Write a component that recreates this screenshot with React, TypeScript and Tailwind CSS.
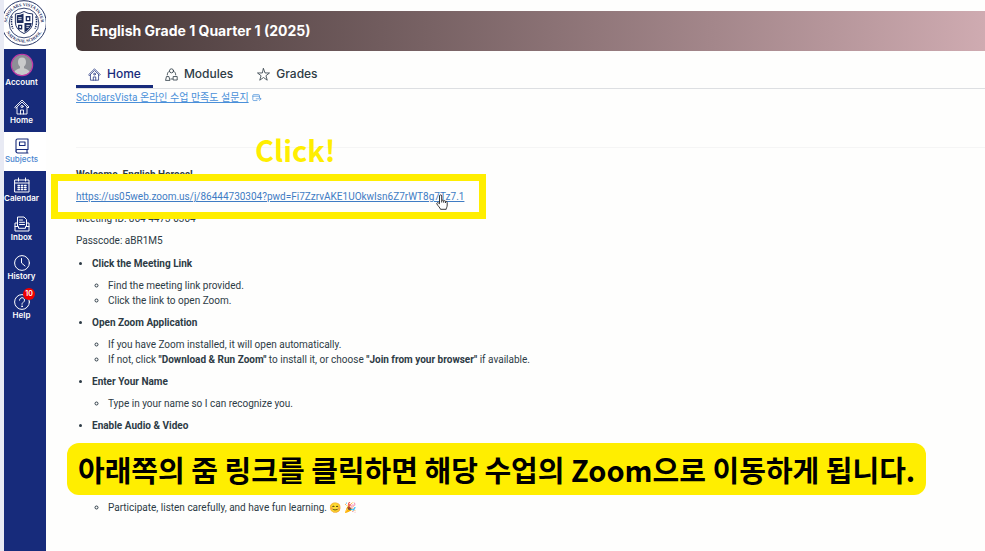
import type { ReactNode } from "react";

interface IconProps {
  className?: string;
}

const stroke = {
  fill: "none",
  stroke: "currentColor",
  strokeLinecap: "round" as const,
  strokeLinejoin: "round" as const,
};

function HouseIcon({ className }: IconProps) {
  return (
    <svg viewBox="0 0 16 16" className={className} {...stroke} strokeWidth="0.9">
      <path d="M1 8 8 1l7 7-1 1-6-6-6 6z" />
      <path d="M3 8.500V15h10V8.500M6.500 15v-4h3v4" />
      <circle cx="8" cy="7.500" r="1.100" />
    </svg>
  );
}

function BookIcon({ className }: IconProps) {
  return (
    <svg viewBox="0 0 16 16" className={className} {...stroke} strokeWidth="1.1">
      <path d="M3.500 1H14v10.500H3.500A1.500 1.500 0 0 0 2 13V2.500A1.500 1.500 0 0 1 3.500 1z" />
      <path d="M2 13a1.800 1.800 0 0 0 1.800 2H14M13 11.500V15" />
      <path d="M5.500 4h5.500v3.500H5.500z" />
    </svg>
  );
}

function CalendarIcon({ className }: IconProps) {
  return (
    <svg viewBox="0 0 16 16" className={className} {...stroke} strokeWidth="1">
      <path d="M1 3h14v12H1zM1 6h14M4.500 1v3M11.500 1v3" />
      <path
        d="M4 8.500h1.500M7.300 8.500h1.500M10.600 8.500h1.500M4 10.500h1.500M7.300 10.500h1.500M10.600 10.500h1.500M4 12.500h1.500M7.300 12.500h1.500M10.600 12.500h1.500"
        strokeWidth="1.3"
      />
    </svg>
  );
}

function InboxIcon({ className }: IconProps) {
  return (
    <svg viewBox="0 0 16 16" className={className} {...stroke} strokeWidth="1">
      <path d="M3.500 10V1h6.500l2.500 2.500V10" />
      <path d="M5.500 4h3M5.500 6.300h5M5.500 8.500h5" />
      <path d="M3.500 7H1v8h14V7h-2.500M1 10.500h3.500v1.800h7v-1.800H15" />
    </svg>
  );
}

function ClockIcon({ className }: IconProps) {
  return (
    <svg viewBox="0 0 16 16" className={className} {...stroke} strokeWidth="1">
      <circle cx="8" cy="8" r="7.400" />
      <path d="M7.500 3.500V8l3.500 3" />
    </svg>
  );
}

function HelpIcon({ className }: IconProps) {
  return (
    <svg viewBox="0 0 16 16" className={className} {...stroke} strokeWidth="1">
      <circle cx="8" cy="8" r="7.400" />
      <path d="M5.500 6.200a2.500 2.500 0 1 1 3.800 2.100C8.400 8.900 8 9.300 8 10.300" />
      <circle cx="8" cy="12.300" r="0.500" />
    </svg>
  );
}

function AvatarIcon() {
  return (
    <svg viewBox="0 0 24 24" className="size-6 shrink-0">
      <circle cx="12" cy="12" r="10.500" fill="#8d8f96" />
      <path
        d="M12 4.500c-2.800 0-4 2-4 4.500 0 2 .8 3.600 2 4.600v1.600c-2 .8-4.600 1.200-5.600 3.600a10.500 10.500 0 0 0 15.200 0c-1-2.400-3.600-2.800-5.600-3.600v-1.600c1.200-1 2-2.600 2-4.600 0-2.500-1.200-4.500-4-4.500z"
        fill="#c9cacb"
      />
      <circle cx="12" cy="12" r="10.700" fill="none" stroke="#c83aa8" strokeWidth="1.1" />
    </svg>
  );
}

function ModulesIcon({ className }: IconProps) {
  return (
    <svg viewBox="0 0 16 16" className={className} {...stroke} strokeWidth="1">
      <circle cx="8" cy="3.500" r="2.500" />
      <path d="M.8 14.800l1-4.300h3l1.200 4.300zM10.500 10.500h4.500v4.300h-4.500z" />
      <path d="M5.500 3.800C3.800 4.600 2.800 6.300 2.800 8.500M10.500 3.800c1.700.8 2.700 2.500 2.700 4.700M7.200 13.500h2" />
    </svg>
  );
}

function StarIcon({ className }: IconProps) {
  return (
    <svg viewBox="0 0 16 16" className={className} {...stroke} strokeWidth="1">
      <path d="M8 .8l1.900 5.300h5.500l-4.400 3.400 1.600 5.500L8 11.700 3.400 15 5 9.500.6 6.100h5.500z" />
    </svg>
  );
}

function ExternalIcon() {
  return (
    <svg viewBox="0 0 12 10" className="h-2 w-[10px]" {...stroke} strokeWidth="0.9">
      <path d="M9 4V1.800a1 1 0 0 0-1-1H1.800a1 1 0 0 0-1 1v5.400a1 1 0 0 0 1 1H6M.8 2.800H9M5 6h6M9 4.200L11 6 9 8" />
    </svg>
  );
}

function SchoolSeal() {
  return (
    <svg viewBox="0 0 48 48" className="size-[46px] shrink-0" role="img" aria-label="Scholars Vista">
      <circle cx="24" cy="24" r="23.300" fill="#fff" stroke="#1c2c5e" strokeWidth="1" />
      <circle cx="24" cy="24" r="15.500" fill="none" stroke="#1c2c5e" strokeWidth="0.9" />
      <defs>
        <path id="seal-top" d="M9.400 34A17.700 17.700 0 1 1 38.600 34" />
        <path id="seal-bottom" d="M3 26A21.200 21.200 0 0 0 45 26" />
      </defs>
      <text fill="#1c2c5e" fontSize="4.500" fontWeight="700" fontFamily="Liberation Serif, serif">
        <textPath href="#seal-top" startOffset="50%" textAnchor="middle">
          SCHOLARS VISTA INTER
        </textPath>
      </text>
      <text fill="#1c2c5e" fontSize="4.500" fontWeight="700" fontFamily="Liberation Serif, serif">
        <textPath href="#seal-bottom" startOffset="50%" textAnchor="middle">
          NATIONAL SCHOOL
        </textPath>
      </text>
      <path d="M15 14.500q5 0 9-2.500 4 2.500 9 2.500V23q0 8-9 12-9-4-9-12z" fill="#fff" stroke="#1c2c5e" strokeWidth="1" />
      <path d="M16.500 16q4 0 7-1.800V24h-7zM24.500 24h7.500q-.5 6.500-7.500 9.700z" fill="#1c2c5e" />
      <path d="M18 18.500h3.500M18 20.500h3.500M26.500 26.500h3.500M26.500 28.500h2.500" stroke="#fff" strokeWidth="0.9" />
      <path d="M26.500 17.500h3.500v4h-3.500zM18.500 26.500h3v3.500h-3z" fill="none" stroke="#1c2c5e" strokeWidth="1.4" />
      <path
        d="M11.500 17q-1.500 7 1 13M36.500 17q1.500 7-1 13"
        fill="none"
        stroke="#1c2c5e"
        strokeWidth="1.6"
        strokeDasharray="1.500 1"
      />
    </svg>
  );
}

function HandCursor() {
  return (
    <svg viewBox="0 0 12 16" className="h-4 w-3" fill="#fff" stroke="#222" strokeWidth="0.9" strokeLinejoin="round">
      <path d="M3.500 9.800V2a1.100 1.100 0 0 1 2.200 0v4.500q1.200-.8 2 .3 1.200-.6 1.800.5 1.500-.3 1.700 1.200V11c0 2-.8 2.600-1 4.300H4.500C4 13.500 2.200 12.400.8 9.800c-.4-1 .9-1.500 1.500-.9z" />
      <path d="M5.700 6.500v2M7.700 7v1.700M9.500 7.500V9" fill="none" />
    </svg>
  );
}

const navItems = [
  { label: "Home", icon: HouseIcon },
  { label: "Subjects", icon: BookIcon, active: true },
  { label: "Calendar", icon: CalendarIcon },
  { label: "Inbox", icon: InboxIcon },
  { label: "History", icon: ClockIcon },
  { label: "Help", icon: HelpIcon, badge: 10 },
];

const tabs = [
  { label: "Home", icon: HouseIcon, active: true },
  { label: "Modules", icon: ModulesIcon },
  { label: "Grades", icon: StarIcon },
];

const steps: { title: string; items: ReactNode[] }[] = [
  {
    title: "Click the Meeting Link",
    items: ["Find the meeting link provided.", "Click the link to open Zoom."],
  },
  {
    title: "Open Zoom Application",
    items: [
      "If you have Zoom installed, it will open automatically.",
      <>
        If not, click <strong>"Download &amp; Run Zoom"</strong> to install it, or choose{" "}
        <strong>"Join from your browser"</strong> if available.
      </>,
    ],
  },
  { title: "Enter Your Name", items: ["Type in your name so I can recognize you."] },
];

function Sidebar() {
  return (
    <aside className="w-[46px] shrink-0 border-l-4 border-[#e8eaf4] bg-[#172b7b] text-white">
      <div className="flex h-[49px] items-end justify-center overflow-hidden bg-white pr-[2px] pb-[3px]">
        <SchoolSeal />
      </div>
      <nav className="flex flex-col text-[8px] leading-[10px] font-semibold">
        <a href="#account" className="flex h-11 flex-col items-center pt-1 pr-[7px]">
          <AvatarIcon />
          Account
        </a>
        {navItems.map(({ label, icon: Icon, active, badge }) => (
          <a
            key={label}
            href={`#${label.toLowerCase()}`}
            className={`relative flex h-[39px] flex-col items-center justify-center pr-[7px] pb-px ${
              active ? "bg-white font-medium text-[#4a86cf]" : ""
            }`}
          >
            <Icon className={active ? "size-4 text-[#172b7b]" : "size-4"} />
            {label}
            {badge && (
              <span className="absolute top-0 right-[11px] flex h-3 w-3 items-center justify-center rounded-full bg-[#f00000] text-[7px]">
                {badge}
              </span>
            )}
          </a>
        ))}
      </nav>
    </aside>
  );
}

function Tabs() {
  return (
    <nav className="flex border-b border-[#dddfe2] text-[12px] leading-4 font-medium text-[#2d3b45]">
      {tabs.map(({ label, icon: Icon, active }) => (
        <a
          key={label}
          href={`#tab-${label.toLowerCase()}`}
          className={`flex h-[29px] items-center gap-[6px] border-b-[3px] px-3 pt-1 ${
            active ? "border-[#172b7b] text-[#172b7b]" : "border-transparent"
          }`}
        >
          <Icon className="size-[13px]" />
          {label}
        </a>
      ))}
    </nav>
  );
}

export default function App() {
  return (
    <div className="relative flex min-h-screen overflow-hidden bg-[#fefefd] font-['Inter','Noto_Sans_CJK_KR',sans-serif]">
      <Sidebar />

      <main className="min-w-0 flex-1 pt-[11px] pl-[30px]">
        <header className="flex h-10 items-center rounded-l-md bg-linear-to-r from-[#463838] to-[#cfabb1] px-[15px]">
          <h1 className="text-[14px] leading-5 font-bold text-white">English Grade 1 Quarter 1 (2025)</h1>
        </header>

        <div className="pt-2">
          <Tabs />
        </div>

        <div className="pt-px font-['Roboto','Noto_Sans_CJK_KR',sans-serif] text-[10px] leading-[15px] text-[#2d3b45]">
          <a href="#survey" className="flex items-center gap-[3px] text-[#4a90d9]">
            <span className="underline">ScholarsVista 온라인 수업 만족도 설문지</span>
            <ExternalIcon />
          </a>

          <hr className="mt-[42px] border-[#f5f5f5]" />

          <div className="flex flex-col gap-[7px] pt-[19px]">
            <p className="font-bold">Welcome, English Heroes!</p>
            <div className="relative w-fit">
              <a href="#zoom-meeting" className="text-[#3f7cc4] underline">
                https://us05web.zoom.us/j/86444730304?pwd=Fi7ZzrvAKE1UOkwIsn6Z7rWT8g7Tz7.1
              </a>
              {/* Highlight around the meeting link */}
              <div className="pointer-events-none absolute -inset-y-[15px] -right-[22px] -left-[25px] border-[7px] border-[#ffee00]" />
              <div className="absolute top-[5px] right-4">
                <HandCursor />
              </div>
              <div className="absolute -top-[62px] left-[179px] font-['Noto_Sans_CJK_KR',sans-serif] text-[29px] leading-[44px] font-bold text-[#ffee00]">
                Click!
              </div>
            </div>
            <p>Meeting ID: 864 4473 0304</p>
            <p>Passcode: aBR1M5</p>

            <ul className="flex list-disc flex-col gap-[7px] pt-px pl-4">
              {steps.map((step) => (
                <li key={step.title}>
                  <strong>{step.title}</strong>
                  <ul className="mt-[7px] list-[circle] pl-4">
                    {step.items.map((item, i) => (
                      <li key={i}>{item}</li>
                    ))}
                  </ul>
                </li>
              ))}
              <li>
                <strong>Enable Audio &amp; Video</strong>
                <ul className="mt-[67px] list-[circle] pl-4">
                  <li>Participate, listen carefully, and have fun learning. 😊 🎉</li>
                </ul>
              </li>
            </ul>
          </div>
        </div>
      </main>

      {/* Caption */}
      <div className="absolute top-[443px] left-[67px] rounded-xl bg-[#ffee00] px-[11px] py-1 font-['Noto_Sans_CJK_KR',sans-serif] text-[29px] leading-[44px] font-bold whitespace-nowrap text-black">
        아래쪽의 줌 링크를 클릭하면 해당 수업의 Zoom으로 이동하게 됩니다.
      </div>
    </div>
  );
}
